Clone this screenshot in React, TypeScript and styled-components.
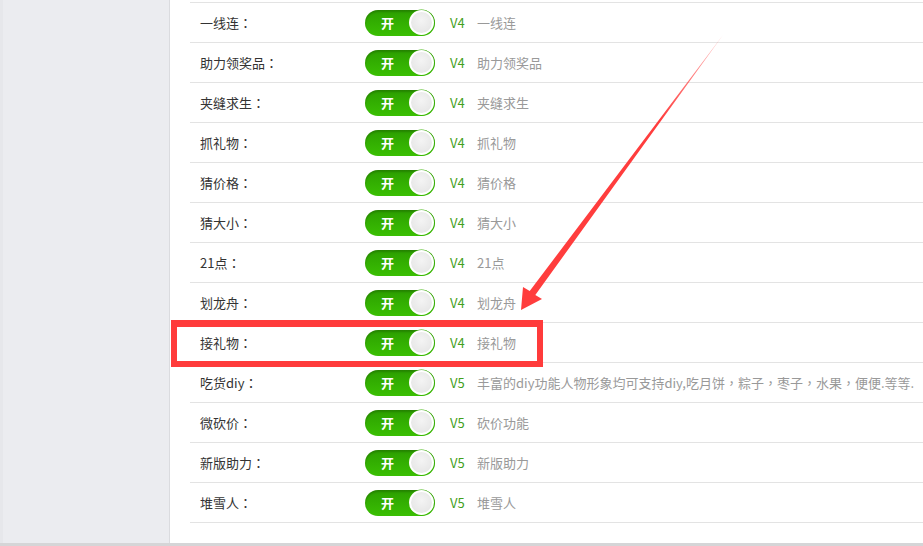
import React from 'react';
import styled, { createGlobalStyle } from 'styled-components';

const PLUGINS = [
  { id: 0, name: '一线连', version: 'V4', desc: '一线连' },
  { id: 1, name: '助力领奖品', version: 'V4', desc: '助力领奖品' },
  { id: 2, name: '夹缝求生', version: 'V4', desc: '夹缝求生' },
  { id: 3, name: '抓礼物', version: 'V4', desc: '抓礼物' },
  { id: 4, name: '猜价格', version: 'V4', desc: '猜价格' },
  { id: 5, name: '猜大小', version: 'V4', desc: '猜大小' },
  { id: 6, name: '21点', version: 'V4', desc: '21点' },
  { id: 7, name: '划龙舟', version: 'V4', desc: '划龙舟' },
  { id: 8, name: '接礼物', version: 'V4', desc: '接礼物', marked: true },
  {
    id: 9,
    name: '吃货diy',
    version: 'V5',
    desc: '丰富的diy功能人物形象均可支持diy,吃月饼，粽子，枣子，水果，便便.等等.',
  },
  { id: 10, name: '微砍价', version: 'V5', desc: '砍价功能' },
  { id: 11, name: '新版助力', version: 'V5', desc: '新版助力' },
  { id: 12, name: '堆雪人', version: 'V5', desc: '堆雪人' },
];

const App = () => {
  return (
    <>
      <GlobalStyle />
      <Page>
        <Body>
          <Sidebar />
          <Main>
            <List>
              {PLUGINS.map((item) => (
                <Row key={item.id} marked={!!item.marked}>
                  <Label>
                    {item.name}
                    <Colon>：</Colon>
                  </Label>
                  <Switch>
                    <SwitchText>开</SwitchText>
                    <Knob />
                  </Switch>
                  <Version>{item.version}</Version>
                  <Desc>{item.desc}</Desc>
                </Row>
              ))}
            </List>
          </Main>
          <Arrow viewBox="0 0 923 543" width="923" height="543">
            <defs>
              <linearGradient id="arrowFade" x1="723" y1="35" x2="660" y2="120" gradientUnits="userSpaceOnUse">
                <stop offset="0" stopColor="#ff3d3d" stopOpacity="0.35" />
                <stop offset="1" stopColor="#ff3d3d" stopOpacity="1" />
              </linearGradient>
            </defs>
            <polygon
              points="723,35 535.3,295 542,299 521,310 523,287 529.7,291"
              fill="url(#arrowFade)"
            />
          </Arrow>
        </Body>
        <BottomBar />
      </Page>
    </>
  );
};

export default App;

const GlobalStyle = createGlobalStyle`
  html, body {
    margin: 0;
    padding: 0;
    overflow: hidden;
    background: #fff;
  }
  body {
    font-family: "Microsoft YaHei", "Noto Sans CJK SC", sans-serif;
    font-size: 13px;
  }
`;

const Page = styled.div`
  width: 923px;
  height: 546px;
  display: flex;
  flex-direction: column;
`;

const Body = styled.div`
  position: relative;
  flex: 1;
  display: flex;
  min-height: 0;
`;

const Sidebar = styled.aside`
  width: 166px;
  flex-shrink: 0;
  background: #ebecf0;
  border-left: 3px solid #e6e7eb;
  border-right: 1px solid #dadbdf;
`;

const Main = styled.main`
  flex: 1;
  padding: 2px 0 0 20px;
  background: #fff;
`;

const List = styled.ul`
  margin: 0;
  padding: 0;
  list-style: none;
  border-bottom: 1px solid #e3e3e3;
`;

const Row = styled.li<{ marked: boolean }>`
  position: relative;
  height: 39px;
  display: flex;
  align-items: center;
  padding-left: 10px;
  border-top: 1px solid #e3e3e3;

  &::after {
    content: '';
    display: ${(props) => (props.marked ? 'block' : 'none')};
    position: absolute;
    z-index: 2;
    left: -19px;
    top: -3px;
    width: 372px;
    height: 47px;
    box-sizing: border-box;
    border: 6px solid #ff3b3b;
    border-top-width: 7px;
  }
`;

const Label = styled.span`
  width: 165px;
  color: #333;
  font-size: 13px;
  white-space: nowrap;
`;

const Colon = styled.span`
  font-family: "Noto Sans CJK TC", sans-serif;
`;

const Switch = styled.span`
  position: relative;
  width: 70px;
  height: 26px;
  border-radius: 13px;
  background: linear-gradient(#2c9f00, #3abf03);
  box-shadow: inset 0 2px 2px rgba(0, 0, 0, 0.18);
  display: flex;
  align-items: center;
`;

const SwitchText = styled.span`
  padding-left: 16px;
  color: #fff;
  font-size: 13px;
  font-weight: bold;
`;

const Knob = styled.span`
  position: absolute;
  right: 1px;
  top: 0.5px;
  width: 21px;
  height: 21px;
  border-radius: 50%;
  border: 2px solid #fff;
  background: radial-gradient(circle at 50% 40%, #f4f4f4, #e2e2e2);
  box-shadow: 0 0 0 0.5px #3ab300;
`;

const Version = styled.span`
  margin-left: 15px;
  width: 27px;
  color: #43a01c;
  font-size: 13px;
`;

const Desc = styled.span`
  color: #999;
  font-size: 13px;
  white-space: nowrap;
  font-family: "Noto Sans CJK TC", "Noto Sans CJK SC", sans-serif;
`;

const Arrow = styled.svg`
  position: absolute;
  left: 0;
  top: 0;
  pointer-events: none;
`;

const BottomBar = styled.div`
  height: 3px;
  background: #d5d5d7;
`;
